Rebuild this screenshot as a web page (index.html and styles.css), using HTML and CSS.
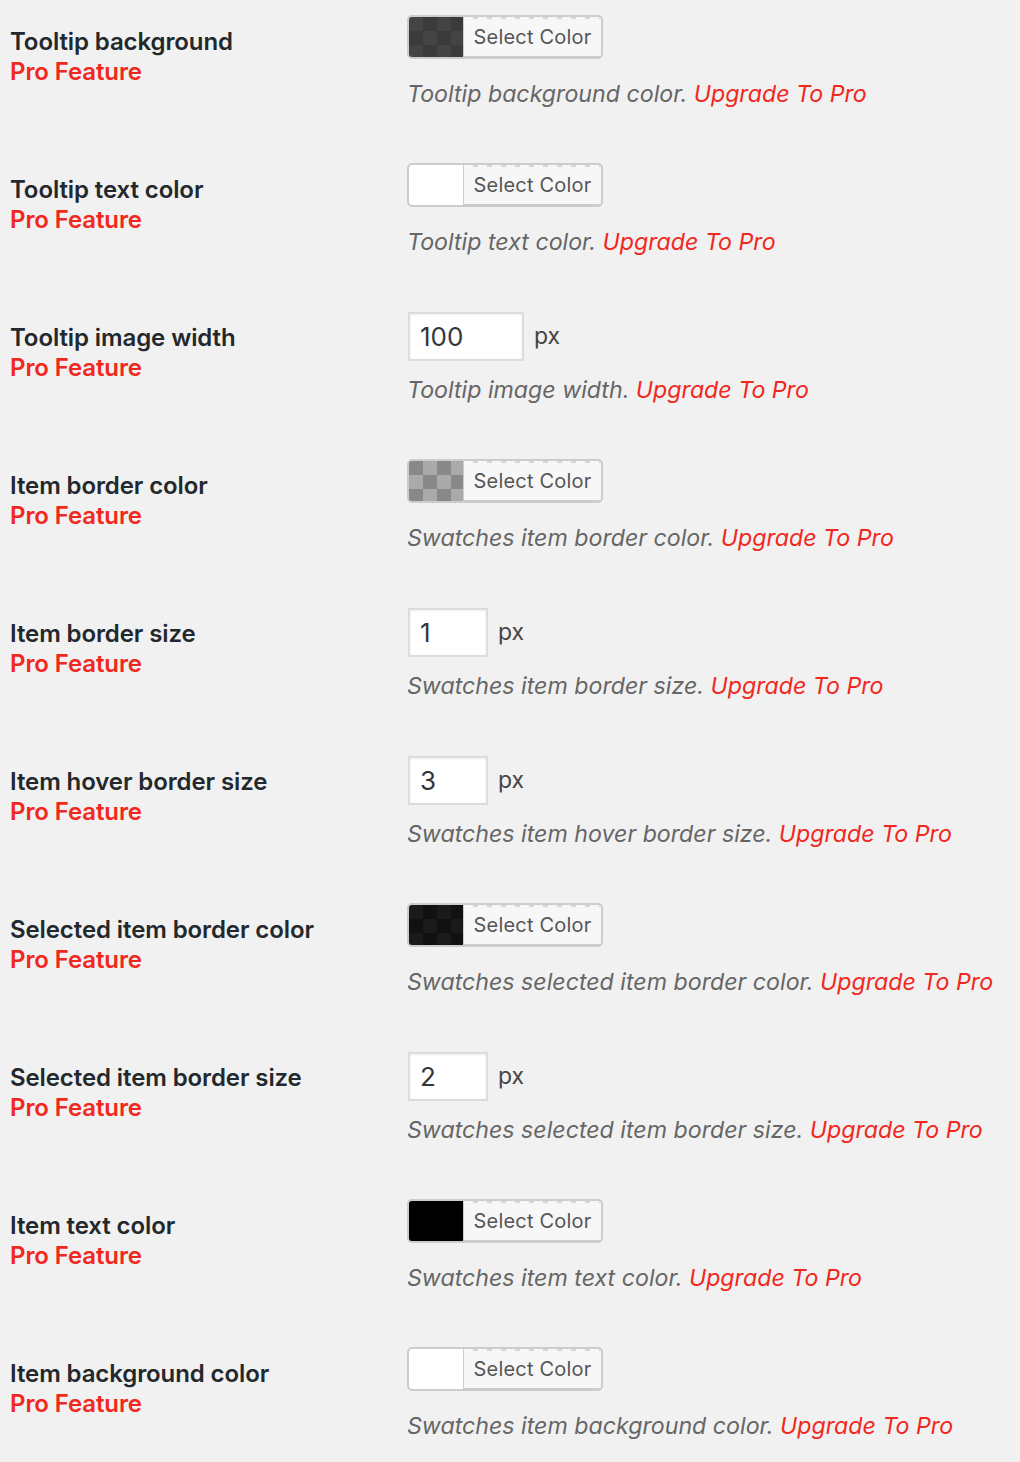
FILE: index.html
```html
<!DOCTYPE html>
<html>
<head>
<meta charset="utf-8">
<link rel="stylesheet" href="styles.css">
</head>
<body>
<div class="settings">
  <div class="row">
    <div class="label"><div class="name">Tooltip background</div><div class="pro">Pro Feature</div></div>
    <div class="field">
      <div class="control"><div class="color-btn"><span class="swatch checker dark"></span><span class="btn-text">Select Color</span></div></div>
      <p class="desc">Tooltip background color. <span class="up">Upgrade To Pro</span></p>
    </div>
  </div>
  <div class="row">
    <div class="label"><div class="name">Tooltip text color</div><div class="pro">Pro Feature</div></div>
    <div class="field">
      <div class="control"><div class="color-btn"><span class="swatch white"></span><span class="btn-text">Select Color</span></div></div>
      <p class="desc">Tooltip text color. <span class="up">Upgrade To Pro</span></p>
    </div>
  </div>
  <div class="row">
    <div class="label"><div class="name">Tooltip image width</div><div class="pro">Pro Feature</div></div>
    <div class="field">
      <div class="control"><span class="num wide">100</span><span class="unit">px</span></div>
      <p class="desc">Tooltip image width. <span class="up">Upgrade To Pro</span></p>
    </div>
  </div>
  <div class="row">
    <div class="label"><div class="name">Item border color</div><div class="pro">Pro Feature</div></div>
    <div class="field">
      <div class="control"><div class="color-btn"><span class="swatch checker gray"></span><span class="btn-text">Select Color</span></div></div>
      <p class="desc">Swatches item border color. <span class="up">Upgrade To Pro</span></p>
    </div>
  </div>
  <div class="row">
    <div class="label"><div class="name">Item border size</div><div class="pro">Pro Feature</div></div>
    <div class="field">
      <div class="control"><span class="num">1</span><span class="unit">px</span></div>
      <p class="desc">Swatches item border size. <span class="up">Upgrade To Pro</span></p>
    </div>
  </div>
  <div class="row">
    <div class="label"><div class="name">Item hover border size</div><div class="pro">Pro Feature</div></div>
    <div class="field">
      <div class="control"><span class="num">3</span><span class="unit">px</span></div>
      <p class="desc">Swatches item hover border size. <span class="up">Upgrade To Pro</span></p>
    </div>
  </div>
  <div class="row">
    <div class="label"><div class="name">Selected item border color</div><div class="pro">Pro Feature</div></div>
    <div class="field">
      <div class="control"><div class="color-btn"><span class="swatch checker black"></span><span class="btn-text">Select Color</span></div></div>
      <p class="desc">Swatches selected item border color. <span class="up">Upgrade To Pro</span></p>
    </div>
  </div>
  <div class="row">
    <div class="label"><div class="name">Selected item border size</div><div class="pro">Pro Feature</div></div>
    <div class="field">
      <div class="control"><span class="num">2</span><span class="unit">px</span></div>
      <p class="desc">Swatches selected item border size. <span class="up">Upgrade To Pro</span></p>
    </div>
  </div>
  <div class="row">
    <div class="label"><div class="name">Item text color</div><div class="pro">Pro Feature</div></div>
    <div class="field">
      <div class="control"><div class="color-btn"><span class="swatch solid-black"></span><span class="btn-text">Select Color</span></div></div>
      <p class="desc">Swatches item text color. <span class="up">Upgrade To Pro</span></p>
    </div>
  </div>
  <div class="row">
    <div class="label"><div class="name">Item background color</div><div class="pro">Pro Feature</div></div>
    <div class="field">
      <div class="control"><div class="color-btn"><span class="swatch white"></span><span class="btn-text">Select Color</span></div></div>
      <p class="desc">Swatches item background color. <span class="up">Upgrade To Pro</span></p>
    </div>
  </div>
</div>
</body>
</html>
```

FILE: styles.css
```css
html, body {
  margin: 0;
  padding: 0;
  background: #f1f1f1;
}
body {
  font-family: Inter, "Liberation Sans", sans-serif;
  color: #23282d;
}
.settings {
  display: flex;
  flex-direction: column;
}
.row {
  display: grid;
  grid-template-columns: 407px 1fr;
  height: 148px;
}
.label {
  padding: 27px 0 0 10px;
  font-size: 24px;
  line-height: 30px;
  letter-spacing: -0.1px;
}
.name {
  font-weight: 600;
  color: #23282d;
}
.pro {
  font-weight: 600;
  color: #f0281e;
}
.field {
  padding-top: 15px;
}
.control {
  height: 50px;
  display: flex;
  align-items: flex-start;
}
.color-btn {
  display: flex;
  width: 196px;
  height: 44px;
  box-sizing: border-box;
  border: 2px solid #ccc;
  border-radius: 5px;
  overflow: hidden;
  background: #ccc;
}
.swatch {
  width: 54px;
  height: 100%;
  flex: none;
}
.checker {
  background-size: 28px 28px;
}
.checker.dark {
  background-color: #444;
  background-image:
    linear-gradient(45deg, #3b3b3b 25%, transparent 25%, transparent 75%, #3b3b3b 75%),
    linear-gradient(45deg, #3b3b3b 25%, transparent 25%, transparent 75%, #3b3b3b 75%);
  background-position: 0 0, 14px 14px;
}
.checker.gray {
  background-color: #aaa;
  background-image:
    linear-gradient(45deg, #888 25%, transparent 25%, transparent 75%, #888 75%),
    linear-gradient(45deg, #888 25%, transparent 25%, transparent 75%, #888 75%);
  background-position: 14px 0, 0 14px;
}
.checker.black {
  background-color: #1a1a1a;
  background-image:
    linear-gradient(45deg, #111 25%, transparent 25%, transparent 75%, #111 75%),
    linear-gradient(45deg, #111 25%, transparent 25%, transparent 75%, #111 75%);
  background-position: 0 0, 14px 14px;
}
.white { background: #fff; }
.solid-black { background: #000; }
.btn-text {
  flex: 1;
  display: flex;
  align-items: center;
  justify-content: center;
  background:
    repeating-linear-gradient(90deg, #f7f7f7 0 9px, #d6d6d6 9px 14px) top / 100% 2px no-repeat,
    #f7f7f7;
  border-left: 1px solid #ccc;
  border-bottom: 1px solid #ccc;
  font-size: 20px;
  color: #555;
  letter-spacing: 0.2px;
}
.num {
  box-sizing: border-box;
  width: 80px;
  height: 49px;
  margin-top: 1px;
  margin-left: 1px;
  border: 2px solid #ddd;
  background: #fff;
  box-shadow: inset 0 1px 3px rgba(0,0,0,0.07);
  font-size: 26px;
  color: #32373c;
  padding-left: 10px;
  display: flex;
  align-items: center;
}
.num.wide {
  width: 116px;
}
.unit {
  margin-left: 10px;
  font-size: 23px;
  color: #444;
  line-height: 49px;
  margin-top: 1px;
}
.desc {
  margin: 14px 0 0;
  font-size: 23.2px;
  font-style: italic;
  color: #666;
  line-height: 30px;
}
.up {
  color: #f0281e;
}
```
